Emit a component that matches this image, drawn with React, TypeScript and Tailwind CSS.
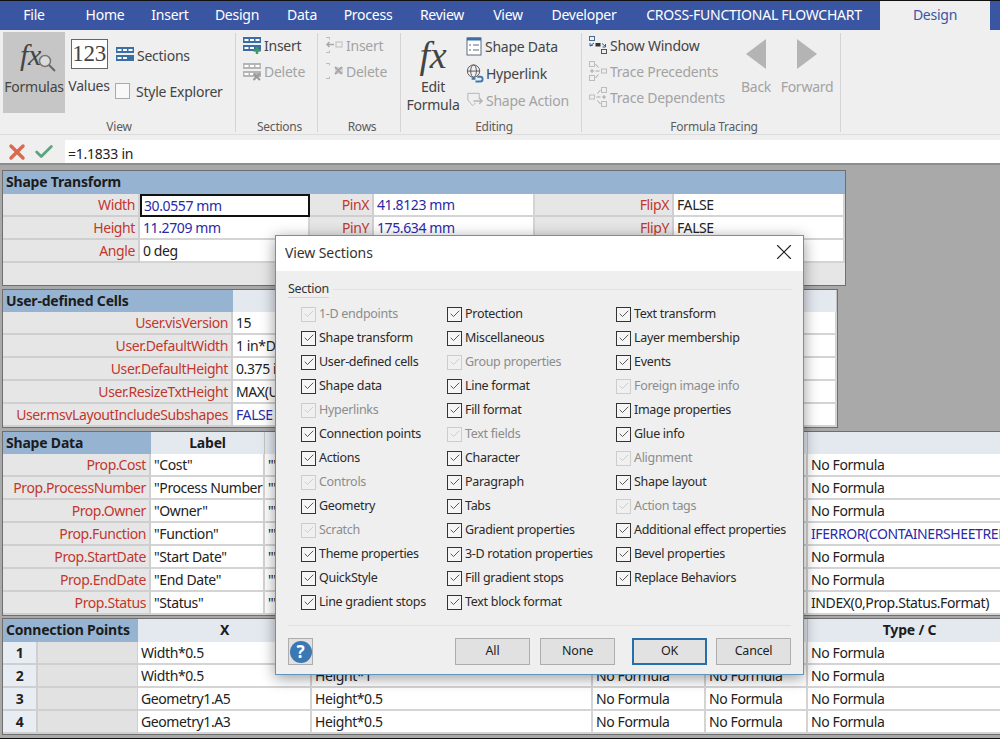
import React from "react";
import { X, Check } from "lucide-react";

const F = '"Noto Sans","Open Sans",sans-serif';

const TableIcon = ({ dim = false, mark }: { dim?: boolean; mark?: "plus" | "x" }) => {
  const c = dim ? "#b5b5b5" : "#3b6ea5";
  return (
    <svg width="20" height="20" viewBox="0 0 20 20" className="shrink-0">
      <rect x="1" y="2" width="18" height="6" fill={c} />
      <rect x="2.5" y="4" width="4" height="2" fill="#fff" />
      <rect x="8" y="4" width="4" height="2" fill="#fff" />
      <rect x="13.5" y="4" width="4" height="2" fill="#fff" />
      <rect x="1" y="10" width="18" height="6" fill={c} />
      <rect x="2.5" y="12" width="4" height="2" fill="#fff" />
      <rect x="8" y="12" width="4" height="2" fill="#fff" />
      {mark === "plus" && <path d="M15 12v7M11.5 15.5h7" stroke="#3f9a66" strokeWidth="2.4" />}
      {mark === "x" && <path d="M11.5 12.5l6.5 6.5M18 12.5l-6.5 6.5" stroke="#9a9a9a" strokeWidth="2" />}
    </svg>
  );
};

const RowIcon = ({ kind }: { kind: "plus" | "x" }) => (
  <svg width="20" height="20" viewBox="0 0 20 20" className="shrink-0" fill="none" stroke="#bdbdbd">
    <path d="M2 2.5h4M2 17.5h4M5.5 2.5v2M5.5 15.5v2" />
    <rect x="12" y="7" width="6" height="5" />
    {kind === "plus" ? (
      <path d="M10 9.5H3M5.5 7L3 9.5 5.5 12" stroke="#a8a8a8" strokeWidth="1.5" />
    ) : (
      <path d="M11 6l7 7M18 6l-7 7" stroke="#a8a8a8" strokeWidth="1.8" />
    )}
  </svg>
);

const ShowWindowIcon = () => (
  <svg width="20" height="20" viewBox="0 0 20 20" className="shrink-0" fill="none" stroke="#4a6a8e">
    <rect x="1.5" y="1.5" width="5" height="4" />
    <path d="M2 8v3l3-1M2 11l4-3" stroke="#2f5f95" />
    <rect x="7.5" y="8" width="5" height="3.5" fill="#333" stroke="none" />
    <path d="M14 8.5l3.5 3M17.5 9v3h-3" stroke="#2f5f95" />
    <rect x="13.5" y="14.5" width="5" height="4" stroke="#555" />
  </svg>
);

const PrecedentsIcon = () => (
  <svg width="20" height="20" viewBox="0 0 20 20" className="shrink-0" fill="none" stroke="#bcbcbc">
    <rect x="1.5" y="0.5" width="5" height="5" />
    <rect x="1.5" y="14.5" width="5" height="5" />
    <path d="M4 8v4M2 10h4" stroke="#a8a8a8" />
    <path d="M7.5 3l3 3.5M7.5 17l3-3.5M7.5 10h4" stroke="#a8a8a8" />
    <rect x="13.5" y="8" width="5" height="4" />
  </svg>
);

const DependentsIcon = () => (
  <svg width="20" height="20" viewBox="0 0 20 20" className="shrink-0" fill="none" stroke="#bcbcbc">
    <rect x="13.5" y="0.5" width="5" height="5" />
    <rect x="13.5" y="14.5" width="5" height="5" />
    <path d="M16 8v4M14 10h4" stroke="#a8a8a8" />
    <path d="M12.5 3l-3 3.5M12.5 17l-3-3.5M12.5 10h-4" stroke="#a8a8a8" />
    <rect x="1.5" y="8" width="5" height="4" />
  </svg>
);

const RibbonItem = ({ icon, label, dim = false }: { icon: React.ReactNode; label: string; dim?: boolean }) => (
  <div className={`flex h-[26px] items-center gap-[2px] whitespace-nowrap text-[14px] ${dim ? "text-[#a3a3a3]" : "text-[#444]"}`}>
    {icon}
    <span>{label}</span>
  </div>
);

const Group = ({ title, width, children }: { title: string; width: string; children: React.ReactNode }) => (
  <div className={`flex h-full shrink-0 flex-col border-r border-[#d4d4d4] ${width}`}>
    <div className="flex min-h-0 flex-1">{children}</div>
    <div className="h-[13px] text-center text-[12px] leading-[16px] text-[#5c5c5c]">{title}</div>
  </div>
);

const tabs: [string, string][] = [
  ["File", "w-[68px]"],
  ["Home", "w-[74px]"],
  ["Insert", "w-[56px]"],
  ["Design", "w-[78px]"],
  ["Data", "w-[52px]"],
  ["Process", "w-[80px]"],
  ["Review", "w-[68px]"],
  ["View", "w-[64px]"],
  ["Developer", "w-[88px]"],
  ["CROSS-FUNCTIONAL FLOWCHART", "w-[252px]"],
];

const Ribbon = () => (
  <div className="bg-[#efefef] tracking-[-0.25px]">
    <div className="flex h-[30px] border-t border-[#111] bg-[#3a56a3] pb-[2px] text-[14px] text-white">
      {tabs.map(([t, w]) => (
        <div key={t + w} className={`flex items-center justify-center whitespace-nowrap ${w}`}>{t}</div>
      ))}
      <div className="-mb-[2px] flex w-[110px] items-center justify-center bg-[#efefef] pb-[2px] text-[#3a56a3]">Design</div>
    </div>
    <div className="flex h-[105px] border-b border-[#dcdcdc] pb-[2px] pt-[3px]">
      <Group title="View" width="w-[236px] pl-[3px]">
        <div className="-mt-px flex h-[81px] w-[62px] flex-col items-center bg-[#c6c6c6] text-[#444]">
          <div className="relative mt-[5px] h-[38px] w-[50px] pl-[11px]">
            <span className="text-[30px] italic leading-[36px] text-[#444]" style={{ fontFamily: '"Liberation Serif",serif' }}>fx</span>
            <svg width="22" height="22" viewBox="0 0 22 22" className="absolute left-[27px] top-[15px]" fill="none">
              <circle cx="9" cy="9" r="5.5" fill="#dcdcdc" stroke="#777" strokeWidth="1.5" />
              <path d="M13 13l6 6" stroke="#666" strokeWidth="2" />
            </svg>
          </div>
          <div className="mt-[1px] text-[14px]">Formulas</div>
        </div>
        <div className="ml-[4px] flex w-[40px] flex-col items-center text-[14px] text-[#444]">
          <div className="mt-[6px] flex h-[30px] w-[37px] items-center justify-center border border-[#666] bg-white text-[23px] text-[#444]" style={{ fontFamily: '"Liberation Serif",serif' }}>123</div>
          <div className="mt-[6px]">Values</div>
        </div>
        <div className="ml-[6px] flex flex-col">
          <div className="mt-[9px]"><RibbonItem icon={<TableIcon />} label="Sections" /></div>
          <div className="mt-[10px] flex h-[26px] items-center gap-[6px] whitespace-nowrap text-[14px] text-[#444]">
            <span className="h-[16px] w-[15px] border border-[#aaa] bg-[#f8f8f8]" />
            <span>Style Explorer</span>
          </div>
        </div>
      </Group>
      <Group title="Sections" width="w-[82px] pl-[6px]">
        <div className="-mt-px flex flex-col">
          <RibbonItem icon={<TableIcon mark="plus" />} label="Insert" />
          <RibbonItem dim icon={<TableIcon dim mark="x" />} label="Delete" />
        </div>
      </Group>
      <Group title="Rows" width="w-[83px] pl-[6px]">
        <div className="-mt-px flex flex-col">
          <RibbonItem dim icon={<RowIcon kind="plus" />} label="Insert" />
          <RibbonItem dim icon={<RowIcon kind="x" />} label="Delete" />
        </div>
      </Group>
      <Group title="Editing" width="w-[181px] pl-[6px]">
        <div className="flex w-[52px] flex-col items-center text-[14px] leading-[18px] text-[#444]">
          <span className="mt-[2px] h-[40px] text-[38px] italic leading-[40px]" style={{ fontFamily: '"Liberation Serif",serif' }}>fx</span>
          <span className="mt-[3px]">Edit</span>
          <span>Formula</span>
        </div>
        <div className="ml-[6px] flex flex-col gap-[1px]">
          <RibbonItem
            icon={
              <svg width="18" height="20" viewBox="0 0 18 20" className="shrink-0" fill="none" stroke="#5a6b80">
                <rect x="2" y="2" width="14" height="17" fill="#fff" />
                <path d="M2 3h14" stroke="#3b6ea5" strokeWidth="3" />
                <path d="M4 9h2M8 9h6M4 14h2M8 14h6" />
              </svg>
            }
            label="Shape Data"
          />
          <RibbonItem
            icon={
              <svg width="19" height="20" viewBox="0 0 20 20" className="shrink-0" fill="none" stroke="#555">
                <circle cx="9" cy="8" r="6.5" />
                <ellipse cx="9" cy="8" rx="3" ry="6.5" />
                <path d="M2.5 8h13" />
                <path d="M7 16h4M13 14h3a2 2 0 010 5h-5" stroke="#3b78b5" strokeWidth="2" />
              </svg>
            }
            label="Hyperlink"
          />
          <RibbonItem
            dim
            icon={
              <svg width="19" height="20" viewBox="0 0 20 20" className="shrink-0" fill="none" stroke="#b5b5b5">
                <path d="M3 10V3h12v6M3 10l5 6 3-3" />
                <path d="M9 11h9M15 8l3 3-3 3" strokeWidth="1.5" />
              </svg>
            }
            label="Shape Action"
          />
        </div>
      </Group>
      <Group title="Formula Tracing" width="w-[259px] pl-[6px]">
        <div className="-mt-px flex w-[147px] shrink-0 flex-col">
          <RibbonItem icon={<ShowWindowIcon />} label="Show Window" />
          <RibbonItem dim icon={<PrecedentsIcon />} label="Trace Precedents" />
          <RibbonItem dim icon={<DependentsIcon />} label="Trace Dependents" />
        </div>
        <div className="flex w-[42px] shrink-0 flex-col items-center text-[14px] text-[#a3a3a3]">
          <svg width="20" height="30" viewBox="0 0 20 30" className="mt-[6px]"><path d="M20 0v30L0 15z" fill="#b4b4b4" /></svg>
          <span className="mt-[7px]">Back</span>
        </div>
        <div className="ml-[4px] flex w-[52px] shrink-0 flex-col items-center whitespace-nowrap text-[14px] text-[#a3a3a3]">
          <svg width="20" height="30" viewBox="0 0 20 30" className="mt-[6px]"><path d="M0 0v30l20-15z" fill="#b4b4b4" /></svg>
          <span className="mt-[7px]">Forward</span>
        </div>
      </Group>
    </div>
  </div>
);

const FormulaBar = () => (
  <div className="flex h-[30px] border-b-2 border-[#8d8d8d] bg-[#efefef] pt-[5px]">
    <div className="flex h-[23px] w-[62px] items-center pl-[5px]">
      <X size={24} strokeWidth={3.4} color="#d9694f" />
      <Check size={22} strokeWidth={3} color="#5ea381" className="ml-[4px]" />
    </div>
    <div className="ml-[3px] flex h-[23px] flex-1 items-center bg-white pl-[3px] pt-[4px] text-[14px] tracking-[-0.25px] text-[#222]">=1.1833 in</div>
  </div>
);

const Label = ({ children }: { children?: React.ReactNode }) => (
  <div className="h-[23px] whitespace-nowrap border-b-2 border-r-2 border-[#cfcfcf] bg-[#e6e6e6] pr-[3px] text-right text-[14px] leading-[21px] text-[#c2372d]">{children}</div>
);
const Val = ({ children, blue = false }: { children?: React.ReactNode; blue?: boolean }) => (
  <div className={`h-[23px] overflow-hidden whitespace-nowrap border-b-2 border-r-2 border-[#d4d4d4] bg-white pl-[3px] text-[14px] leading-[21px] ${blue ? "text-[#2a2aa8]" : "text-[#222]"}`}>{children}</div>
);
const HeadBlue = ({ children, span = "" }: { children?: React.ReactNode; span?: string }) => (
  <div className={`h-[23px] whitespace-nowrap bg-[#96b3d2] pl-[3px] text-[14px] font-bold leading-[22px] tracking-[-0.2px] text-[#1c1c1c] ${span}`}>{children}</div>
);
const HeadLight = ({ children }: { children?: React.ReactNode }) => (
  <div className="h-[23px] whitespace-nowrap border-r border-[#c4c4c4] bg-[#e4e9f0] text-center text-[14px] font-bold leading-[22px] tracking-[-0.2px] text-[#1c1c1c]">{children}</div>
);

const Sheet = () => (
  <div className="h-[573px] overflow-hidden bg-[#a9a9a9] pl-[2px] pt-[5px] tracking-[-0.4px]">
    {/* Shape Transform */}
    <div className="grid w-[844px] grid-cols-[137px_170px_64px_161px_139px_1fr] border border-[#6f6f6f] bg-[#e6e6e6]">
      <HeadBlue span="col-span-6">Shape Transform</HeadBlue>
      <Label>Width</Label>
      <div className="h-[23px] border-2 border-[#111] bg-white pl-[2px] text-[14px] leading-[19px] text-[#2a2aa8]">30.0557 mm</div>
      <Label>PinX</Label>
      <Val blue>41.8123 mm</Val>
      <Label>FlipX</Label>
      <Val>FALSE</Val>
      <Label>Height</Label>
      <Val blue>11.2709 mm</Val>
      <Label>PinY</Label>
      <Val blue>175.634 mm</Val>
      <Label>FlipY</Label>
      <Val>FALSE</Val>
      <Label>Angle</Label>
      <Val>0 deg</Val>
      <Label>LocPinX</Label>
      <Val>Width*0.5</Val>
      <Label>ResizeMode</Label>
      <Val />
      <div className="col-span-6 h-[22px]" />
    </div>
    {/* User-defined Cells */}
    <div className="mt-[3px] grid w-[836px] grid-cols-[230px_1fr] grid-rows-[22px_repeat(5,23px)] border border-[#6f6f6f]">
      <HeadBlue>User-defined Cells</HeadBlue>
      <HeadLight />
      <Label>User.visVersion</Label>
      <Val>15</Val>
      <Label>User.DefaultWidth</Label>
      <Val>1 in*DropOnPageScale</Val>
      <Label>User.DefaultHeight</Label>
      <Val>0.375 in*DropOnPageScale</Val>
      <Label>User.ResizeTxtHeight</Label>
      <Val>MAX(User.DefaultHeight)</Val>
      <Label>User.msvLayoutIncludeSubshapes</Label>
      <Val blue>FALSE</Val>
    </div>
    {/* Shape Data */}
    <div className="mt-[3px] grid w-[1010px] grid-cols-[148px_114px_543px_1fr] grid-rows-[22px_repeat(7,23px)] border border-r-0 border-[#6f6f6f]">
      <HeadBlue>Shape Data</HeadBlue>
      <HeadLight>Label</HeadLight>
      <HeadLight>Prompt</HeadLight>
      <HeadLight />
      {[
        ["Prop.Cost", '"Cost"', "No Formula"],
        ["Prop.ProcessNumber", '"Process Number"', "No Formula"],
        ["Prop.Owner", '"Owner"', "No Formula"],
        ["Prop.Function", '"Function"', "IFERROR(CONTAINERSHEETREF(1))"],
        ["Prop.StartDate", '"Start Date"', "No Formula"],
        ["Prop.EndDate", '"End Date"', "No Formula"],
        ["Prop.Status", '"Status"', "INDEX(0,Prop.Status.Format)"],
      ].map(([a, b, c]) => (
        <React.Fragment key={a}>
          <Label>{a}</Label>
          <Val>{b}</Val>
          <Val>""</Val>
          <Val blue={c.startsWith("IFERROR")}>{c}</Val>
        </React.Fragment>
      ))}
    </div>
    {/* Connection Points */}
    <div className="mt-[2px] grid w-[1010px] grid-cols-[35px_100px_174px_281px_113px_102px_1fr] border-y border-l border-[#6f6f6f]">
      <HeadBlue span="col-span-2">Connection Points</HeadBlue>
      <HeadLight>X</HeadLight>
      <HeadLight>Y</HeadLight>
      <HeadLight>Dir X / A</HeadLight>
      <HeadLight>Dir Y / B</HeadLight>
      <HeadLight>Type / C</HeadLight>
      {[
        ["1", "Width*0.5", "Height*0"],
        ["2", "Width*0.5", "Height*1"],
        ["3", "Geometry1.A5", "Height*0.5"],
        ["4", "Geometry1.A3", "Height*0.5"],
      ].map(([n, x, y]) => (
        <React.Fragment key={n}>
          <div className="h-[23px] border-b-2 border-r-2 border-[#cfcfcf] bg-[#e8edf3] text-center text-[14px] font-bold leading-[21px] text-[#222]">{n}</div>
          <div className="h-[23px] border-b-2 border-r border-[#cfcfcf] bg-[#e2e2e2]" />
          <Val>{x}</Val>
          <Val>{y}</Val>
          <Val>No Formula</Val>
          <Val>No Formula</Val>
          <Val>No Formula</Val>
        </React.Fragment>
      ))}
    </div>
  </div>
);

const columns: [string, boolean][][] = [
  [
    ["1-D endpoints", true], ["Shape transform", false], ["User-defined cells", false], ["Shape data", false],
    ["Hyperlinks", true], ["Connection points", false], ["Actions", false], ["Controls", true],
    ["Geometry", false], ["Scratch", true], ["Theme properties", false], ["QuickStyle", false], ["Line gradient stops", false],
  ],
  [
    ["Protection", false], ["Miscellaneous", false], ["Group properties", true], ["Line format", false],
    ["Fill format", false], ["Text fields", true], ["Character", false], ["Paragraph", false], ["Tabs", false],
    ["Gradient properties", false], ["3-D rotation properties", false], ["Fill gradient stops", false], ["Text block format", false],
  ],
  [
    ["Text transform", false], ["Layer membership", false], ["Events", false], ["Foreign image info", true],
    ["Image properties", false], ["Glue info", false], ["Alignment", true], ["Shape layout", false], ["Action tags", true],
    ["Additional effect properties", false], ["Bevel properties", false], ["Replace Behaviors", false],
  ],
];

const CheckRow = ({ label, dim }: { label: string; dim: boolean }) => (
  <div className={`flex h-[24px] items-center gap-[3px] whitespace-nowrap text-[12.5px] tracking-[-0.3px] ${dim ? "text-[#8c8c8c]" : "text-[#2a2a2a]"}`}>
    <span className={`flex h-[15px] w-[15px] shrink-0 items-center justify-center border ${dim ? "border-[#cdcdcd] bg-[#f0f0f0]" : "border-[#333] bg-[#f5f5f5]"}`}>
      <Check size={12} strokeWidth={1.6} color={dim ? "#c4c4c4" : "#333"} />
    </span>
    <span>{label}</span>
  </div>
);

const DlgButton = ({ label, primary = false }: { label: string; primary?: boolean }) => (
  <div className={`flex h-[27px] w-[75px] items-center justify-center text-[12.5px] tracking-[-0.2px] text-[#222] ${primary ? "border-2 border-[#2a6ea8] bg-[#e2e2e2]" : "border border-[#adadad] bg-[#e1e1e1]"}`}>{label}</div>
);

const Dialog = () => (
  <div className="absolute left-[275px] top-[235px] flex h-[440px] w-[529px] flex-col border border-[#5f95ba] bg-[#efefef] shadow-[0_3px_14px_rgba(0,0,0,0.4)]">
    <div className="flex h-[35px] items-center justify-between bg-white pb-[3px] pl-[9px] pr-[6px] text-[14px] tracking-[-0.1px] text-[#333]">
      <span>View Sections</span>
      <X size={26} strokeWidth={1} color="#222" />
    </div>
    <div className="mt-[9px] flex items-center pl-[12px] pr-[11px] text-[12.5px] leading-[17px] tracking-[-0.3px] text-[#333]">
      <span className="border-b border-[#d5d5d5]">Section</span>
      <span className="ml-[4px] h-[1px] flex-1 bg-[#dce2e8]" />
    </div>
    <div className="mt-[4px] flex pl-[25px]">
      {columns.map((col, i) => (
        <div key={i} className={i === 0 ? "w-[146px]" : i === 1 ? "w-[169px]" : ""}>
          {col.map(([l, d]) => <CheckRow key={l} label={l} dim={d} />)}
        </div>
      ))}
    </div>
    <div className="mx-[12px] mt-[11px] h-[1px] bg-[#dce2e8]" />
    <div className="mt-[12px] flex items-center pl-[12px] pr-[12px]">
      <div className="flex h-[27px] w-[25px] items-center justify-center border border-[#adadad] bg-[#e1e1e1]">
        <span className="flex h-[22px] w-[22px] items-center justify-center rounded-full bg-[#3b78b3] text-[17px] font-bold text-white">?</span>
      </div>
      <div className="ml-auto flex">
        <DlgButton label="All" />
        <div className="ml-[10px]"><DlgButton label="None" /></div>
        <div className="ml-[17px]"><DlgButton label="OK" primary /></div>
        <div className="ml-[9px]"><DlgButton label="Cancel" /></div>
      </div>
    </div>
  </div>
);

export default function App() {
  return (
    <div className="relative h-[739px] w-[1000px] overflow-hidden border-b border-[#111] bg-[#a9a9a9]" style={{ fontFamily: F }}>
      <Ribbon />
      <FormulaBar />
      <Sheet />
      <Dialog />
    </div>
  );
}
